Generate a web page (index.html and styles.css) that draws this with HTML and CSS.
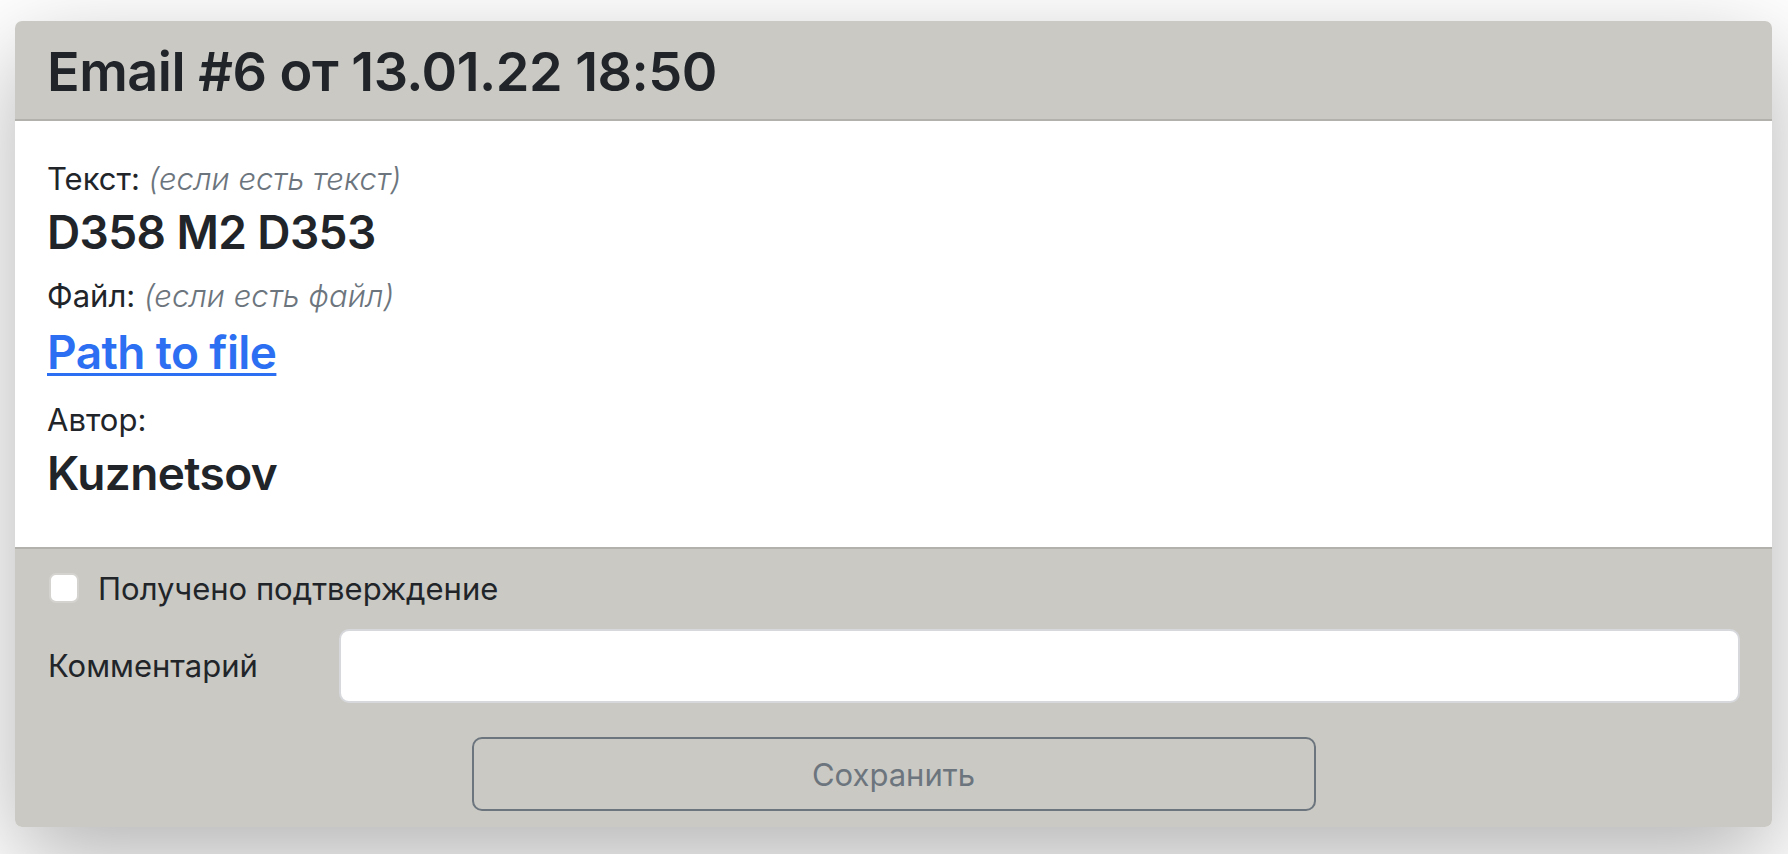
FILE: index.html
```html
<!DOCTYPE html>
<html lang="ru">
<head>
<meta charset="utf-8">
<title>Email #6</title>
<link rel="stylesheet" href="styles.css">
</head>
<body>
<div class="page">
  <div class="card">
    <div class="card-header">
      <h2 class="title">Email #6 от 13.01.22 18:50</h2>
    </div>
    <div class="card-body">
      <p class="label">Текст: <span class="hint">(если есть текст)</span></p>
      <h4 class="value v1">D358 M2 D353</h4>
      <p class="label">Файл: <span class="hint">(если есть файл)</span></p>
      <h4 class="value v2"><a class="file-link" href="#">Path to file</a></h4>
      <p class="label">Автор:</p>
      <h4 class="value">Kuznetsov</h4>
    </div>
    <div class="card-footer">
      <label class="check">
        <input class="check-input" type="checkbox">
        <span class="check-label">Получено подтверждение</span>
      </label>
      <div class="comment-row">
        <label class="comment-label" for="comment">Комментарий</label>
        <input class="field" id="comment" type="text">
      </div>
      <div class="actions">
        <button class="btn" type="button">Сохранить</button>
      </div>
    </div>
  </div>
</div>
</body>
</html>
```

FILE: styles.css
```css
* { box-sizing: border-box; }

html, body {
  margin: 0;
  padding: 0;
  background: #ffffff;
}

body {
  font-family: Inter, "Noto Sans", "DejaVu Sans", sans-serif;
  color: #212529;
  min-height: 100vh;
}

.page {
  padding: 21px 16px 60px 15px;
  min-height: 100vh;
}

.card {
  background: #ffffff;
  border-radius: 7px;
  overflow: hidden;
  box-shadow: 0 32px 96px rgba(0, 0, 0, 0.3);
}

.card-header {
  background: #cac9c4;
  border-bottom: 2px solid #b2b1ac;
  padding: 18px 32px 14px;
}

.title {
  margin: 0;
  font-size: 54px;
  line-height: 66px;
  font-weight: 600;
  letter-spacing: -0.5px;
  color: #212529;
}

.card-body {
  padding: 34px 32px 45px;
}

.label {
  margin: 0;
  font-size: 31px;
  line-height: 48px;
  font-weight: 400;
}

.hint {
  font-style: italic;
  font-weight: 300;
  color: #6c757d;
}

.value {
  margin: 0;
  font-size: 46px;
  line-height: 58px;
  font-weight: 600;
  letter-spacing: -0.6px;
}

.v1 { margin-bottom: 11px; }
.v2 { margin-top: 3px; margin-bottom: 15px; }

.file-link {
  color: #2d6ff2;
  text-decoration: underline;
  text-decoration-thickness: 3px;
  text-underline-offset: 4px;
}

.card-footer {
  background: #cac9c4;
  border-top: 2px solid #b2b1ac;
  padding: 16px 32px 16px;
}

.check {
  display: flex;
  align-items: flex-start;
  gap: 19px;
  font-size: 31px;
  line-height: 48px;
}

.check-input {
  appearance: none;
  -webkit-appearance: none;
  margin: 8px 0 0 2px;
  width: 30px;
  height: 30px;
  background: #ffffff;
  border: 2px solid #d4d3cf;
  border-radius: 7px;
  flex: none;
}

.comment-row {
  display: grid;
  grid-template-columns: 292px 1fr;
  align-items: center;
  margin-top: 16px;
}

.comment-label {
  font-size: 31px;
  line-height: 48px;
  padding-left: 1px;
}

.field {
  height: 74px;
  width: 100%;
  background: #ffffff;
  border: 2px solid #d6d8dc;
  border-radius: 10px;
  font: inherit;
  font-size: 31px;
  padding: 0 24px;
}

.actions {
  display: flex;
  justify-content: center;
  margin-top: 34px;
}

.btn {
  width: 844px;
  height: 74px;
  background: transparent;
  border: 2px solid #6c757d;
  border-radius: 10px;
  color: #6c757d;
  font-family: inherit;
  font-size: 31px;
  font-weight: 400;
}
```
